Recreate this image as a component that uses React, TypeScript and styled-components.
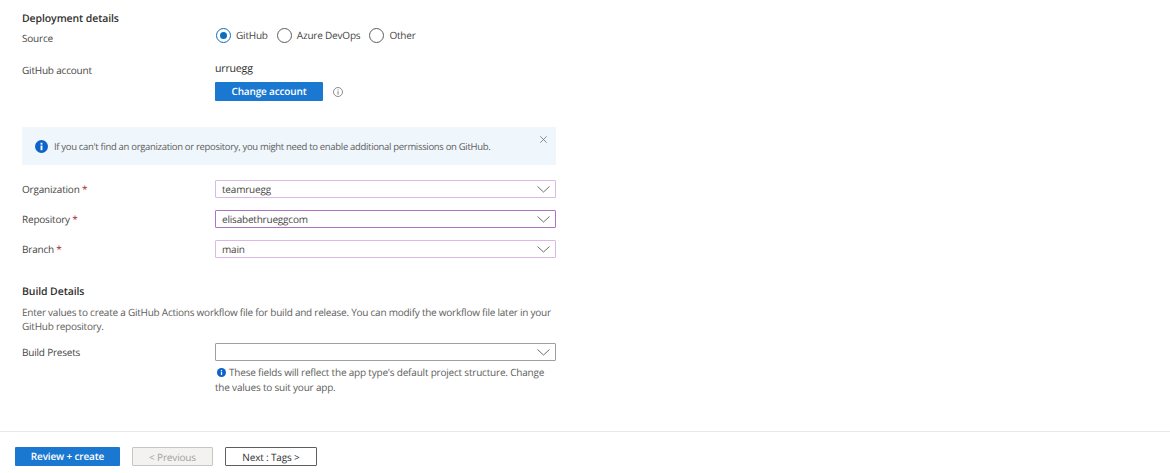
import React from 'react';
import styled, { createGlobalStyle } from 'styled-components';

const GlobalStyle = createGlobalStyle`
	html, body {
		margin: 0;
		padding: 0;
		background: #fff;
	}

	body {
		font-family: 'Open Sans', 'Noto Sans', sans-serif;
		font-size: 10px;
		letter-spacing: -0.2px;
		text-rendering: geometricPrecision;
		color: #323130;
	}
`;

function Chevron() {
	return (
		<svg width='13' height='7' viewBox='0 0 13 7' fill='none'>
			<path d='M0.5 0.5L6.5 6L12.5 0.5' stroke='#605e5c' strokeWidth='0.9' />
		</svg>
	);
}

function FilledInfo({ size }: { size: number }) {
	return (
		<svg width={size} height={size} viewBox='0 0 14 14'>
			<circle cx='7' cy='7' r='7' fill='#0f62c9' />
			<rect x='6' y='6' width='2' height='5' fill='#fff' />
			<rect x='6' y='3' width='2' height='2' fill='#fff' />
		</svg>
	);
}

function Dropdown({ value, tone }: { value?: string; tone?: 'light' | 'strong' | 'plain' }) {
	return (
		<Select $tone={tone ?? 'light'}>
			<span>{value}</span>
			<Chevron />
		</Select>
	);
}

export default function App() {
	return (
		<Page>
			<GlobalStyle />
			<Content>
				<Heading>Deployment details</Heading>
				<SourceRow>
					<Label>Source</Label>
					<RadioGroup>
						<RadioItem>
							<Radio $checked />
							GitHub
						</RadioItem>
						<RadioItem>
							<Radio />
							Azure DevOps
						</RadioItem>
						<RadioItem>
							<Radio />
							Other
						</RadioItem>
					</RadioGroup>
				</SourceRow>
				<AccountRow>
					<Label>GitHub account</Label>
					<div>
						<AccountName>urruegg</AccountName>
						<ChangeRow>
							<PrimaryButton $width={108}>Change account</PrimaryButton>
							<svg width='10' height='10' viewBox='0 0 10 10' fill='none'>
								<circle cx='5' cy='5' r='4.5' stroke='#605e5c' strokeWidth='0.7' />
								<path d='M5 4.2V7.6M5 2.4V3.3' stroke='#605e5c' strokeWidth='0.8' />
							</svg>
						</ChangeRow>
					</div>
				</AccountRow>
				<Banner>
					<FilledInfo size={13} />
					<BannerText>
						If you can't find an organization or repository, you might need to enable additional permissions on
						GitHub.
					</BannerText>
					<CloseIcon width='7' height='7' viewBox='0 0 7 7' fill='none'>
						<path d='M0.3 0.3L6.7 6.7M6.7 0.3L0.3 6.7' stroke='#605e5c' strokeWidth='0.7' />
					</CloseIcon>
				</Banner>
				<FieldRows>
					<FieldRow>
						<Label>
							Organization <Required>*</Required>
						</Label>
						<Dropdown value='teamruegg' />
					</FieldRow>
					<FieldRow>
						<Label>
							Repository <Required>*</Required>
						</Label>
						<Dropdown value='elisabethrueggcom' tone='strong' />
					</FieldRow>
					<FieldRow>
						<Label>
							Branch <Required>*</Required>
						</Label>
						<Dropdown value='main' />
					</FieldRow>
				</FieldRows>
				<BuildHeading>Build Details</BuildHeading>
				<Description>
					Enter values to create a GitHub Actions workflow file for build and release. You can modify the workflow
					file later in your GitHub repository.
				</Description>
				<PresetRow>
					<PresetLabel>Build Presets</PresetLabel>
					<div>
						<Dropdown tone='plain' />
						<Note>
							<NoteIcon>
								<FilledInfo size={9} />
							</NoteIcon>
							These fields will reflect the app type's default project structure. Change the values to suit your app.
						</Note>
					</div>
				</PresetRow>
			</Content>
			<Footer>
				<PrimaryButton $width={105}>Review + create</PrimaryButton>
				<DisabledButton>&lt; Previous</DisabledButton>
				<OutlineButton>Next : Tags &gt;</OutlineButton>
			</Footer>
		</Page>
	);
}

const Page = styled.div`
	width: 1170px;
	height: 473px;
	overflow: hidden;
	background: #fff;
`;

const Content = styled.div`
	width: 534px;
	height: 431px;
	margin-left: 22px;
	padding-top: 12px;
	box-sizing: border-box;
`;

const Heading = styled.div`
	font-size: 10.5px;
	font-weight: 600;
	line-height: 14px;
	letter-spacing: -0.1px;
`;

const Label = styled.div`
	line-height: 14px;
	color: #484644;
`;

const Required = styled.span`
	color: #a4262c;
`;

const SourceRow = styled.div`
	display: grid;
	grid-template-columns: 193px 1fr;
	margin-top: 5px;
`;

const RadioGroup = styled.div`
	display: flex;
	gap: 8px;
	margin-top: -4px;
`;

const RadioItem = styled.label`
	display: flex;
	align-items: center;
	gap: 5px;
	height: 16px;
	line-height: 14px;
	color: #484644;
`;

const Radio = styled.span<{ $checked?: boolean }>`
	position: relative;
	width: 15px;
	height: 15px;
	box-sizing: border-box;
	margin-left: 1px;
	border-radius: 50%;
	border: 1px solid ${({ $checked }) => ($checked ? '#0f6cbd' : '#605e5c')};

	&::after {
		content: '';
		display: ${({ $checked }) => ($checked ? 'block' : 'none')};
		position: absolute;
		top: 3px;
		left: 3px;
		width: 7px;
		height: 7px;
		border-radius: 50%;
		background: #0f6cbd;
	}
`;

const AccountRow = styled.div`
	display: grid;
	grid-template-columns: 193px 1fr;
	margin-top: 18px;
`;

const AccountName = styled.div`
	line-height: 14px;
	font-size: 10.6px;
	margin-top: -1px;
`;

const ChangeRow = styled.div`
	display: flex;
	align-items: center;
	gap: 10px;
	margin-top: 6px;
`;

const PrimaryButton = styled.button<{ $width: number }>`
	width: ${({ $width }) => $width}px;
	height: 19px;
	padding: 0 0 1px;
	border: 0;
	border-radius: 1px;
	background: #1a78d0;
	color: #fff;
	font: 600 10px 'Open Sans', sans-serif;
	letter-spacing: -0.16px;
	text-rendering: geometricPrecision;
`;

const Banner = styled.div`
	position: relative;
	display: flex;
	align-items: center;
	gap: 6px;
	height: 38px;
	margin-top: 26px;
	padding-left: 13px;
	background: #eff6fc;
`;

const BannerText = styled.span`
	font-size: 9.5px;
	letter-spacing: -0.32px;
	color: #605e5c;
`;

const CloseIcon = styled.svg`
	position: absolute;
	top: 9px;
	right: 9px;
`;

const FieldRows = styled.div`
	display: flex;
	flex-direction: column;
	gap: 12px;
	margin-top: 15px;
`;

const FieldRow = styled.div`
	display: grid;
	grid-template-columns: 193px 1fr;
	align-items: center;
`;

const selectBorders = {
	light: '#dcb8e4',
	strong: '#b072c4',
	plain: '#a19f9d',
};

const Select = styled.div<{ $tone: 'light' | 'strong' | 'plain' }>`
	display: flex;
	align-items: center;
	justify-content: space-between;
	height: 18px;
	box-sizing: border-box;
	padding: 0 5px 0 6px;
	border: 1px solid ${({ $tone }) => selectBorders[$tone]};
	border-radius: 1px;
	color: #484644;
`;

const BuildHeading = styled(Heading)`
	margin-top: 27px;
`;

const Description = styled.p`
	margin: 6px 0 0;
	line-height: 14px;
	letter-spacing: -0.24px;
	color: #605e5c;
`;

const PresetRow = styled.div`
	display: grid;
	grid-template-columns: 193px 1fr;
	margin-top: 10px;
`;

const PresetLabel = styled(Label)`
	padding-top: 2px;
`;

const Note = styled.div`
	margin-top: 4px;
	line-height: 14px;
	color: #605e5c;
`;

const NoteIcon = styled.span`
	display: inline-block;
	margin: 0 3px 0 2px;
	vertical-align: -1px;
`;

const Footer = styled.div`
	display: flex;
	gap: 12px;
	height: 42px;
	box-sizing: border-box;
	padding: 15px 0 0 15px;
	border-top: 1px solid #e8e8e8;
`;

const DisabledButton = styled.button`
	width: 81px;
	height: 19px;
	padding: 0;
	border: 1px solid #c8c6c4;
	border-radius: 1px;
	background: #f3f2f1;
	color: #a19f9d;
	font: 10px 'Open Sans', sans-serif;
	letter-spacing: -0.16px;
	text-rendering: geometricPrecision;
`;

const OutlineButton = styled.button`
	width: 92px;
	height: 19px;
	padding: 0;
	border: 1px solid #605e5c;
	border-radius: 1px;
	background: #fff;
	color: #323130;
	font: 10px 'Open Sans', sans-serif;
	letter-spacing: -0.16px;
	text-rendering: geometricPrecision;
`;
